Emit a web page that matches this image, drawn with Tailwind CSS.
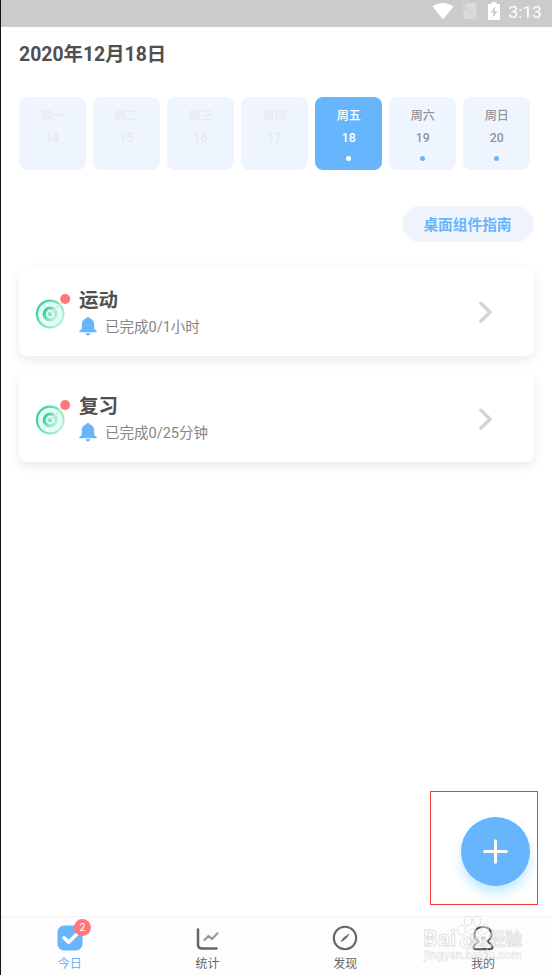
<!DOCTYPE html>
<html lang="zh-CN">
<head>
  <meta charset="UTF-8">
  <meta name="viewport" content="width=device-width, initial-scale=1.0">
  <title>今日</title>
  <script src="https://cdn.jsdelivr.net/npm/@tailwindcss/browser@4"></script>
</head>
<body class="relative flex flex-col h-[975px] overflow-hidden bg-white border-l border-[#10141f] font-[Roboto,'Noto_Sans_CJK_SC',sans-serif] text-[#505050]">
  <!-- Status bar -->
  <header class="flex items-center h-[26.5px] shrink-0 bg-[#cbcbcb] pl-[431px] text-white">
    <svg class="w-[22px] h-[18px] -mt-1" viewBox="0 0 22 18"><path d="M11 17.5 .5 4.500C6.500-.2 15.500-.2 21.500 4.500Z" fill="#fff"/></svg>
    <svg class="w-4 h-[18px] ml-2 -mt-1" viewBox="0 0 16 18"><path d="M6 1h8.500v14L3.500 3.500ZM1.500 5.500 13 17H1.500Z" fill="#dadada"/><path d="M.5 2.500 15 17.500" stroke="#dadada" stroke-width="1.500"/></svg>
    <svg class="w-3 h-[18px] ml-[10px] -mt-1" viewBox="0 0 12 18"><path d="M3.500 0h5v2H12v16H0V2h3.500Z" fill="#fff"/><path d="M7.500 4 2.500 10.500h3L4.500 16l5-7h-3Z" fill="#cbcbcb"/></svg>
    <span class="ml-[8.500px] -mt-[2px] text-[17.300px] leading-5">3:13</span>
  </header>

  <main class="flex-1 pl-[18px]">
    <h1 class="mt-[14px] h-[28px] text-[19.400px] leading-[28px] font-bold">2020年12月18日</h1>

    <!-- Week -->
    <div class="flex gap-[7.400px] mt-[28px] text-[12.300px] font-medium text-center text-[#e8e9eb]">
      <div class="w-[66.700px] h-[73.500px] rounded-lg bg-[#eff5ff] pt-[8px]">
        <p class="h-[22px] leading-[22px] text-[12px]">周一</p>
        <p class="h-[22px] leading-[22px]">14</p>
      </div>
      <div class="w-[66.700px] h-[73.500px] rounded-lg bg-[#eff5ff] pt-[8px]">
        <p class="h-[22px] leading-[22px] text-[12px]">周二</p>
        <p class="h-[22px] leading-[22px]">15</p>
      </div>
      <div class="w-[66.700px] h-[73.500px] rounded-lg bg-[#eff5ff] pt-[8px]">
        <p class="h-[22px] leading-[22px] text-[12px]">周三</p>
        <p class="h-[22px] leading-[22px]">16</p>
      </div>
      <div class="w-[66.700px] h-[73.500px] rounded-lg bg-[#eff5ff] pt-[8px]">
        <p class="h-[22px] leading-[22px] text-[12px]">周四</p>
        <p class="h-[22px] leading-[22px]">17</p>
      </div>
      <div class="w-[66.700px] h-[73.500px] rounded-lg bg-[#66b5fd] pt-[8px] text-white">
        <p class="h-[22px] leading-[22px] text-[12px]">周五</p>
        <p class="h-[22px] leading-[22px]">18</p>
        <i class="block w-[5px] h-[5px] mx-auto mt-[7.500px] rounded-full bg-white"></i>
      </div>
      <div class="w-[66.700px] h-[73.500px] rounded-lg bg-[#eff5ff] pt-[8px] text-[#8f939b]">
        <p class="h-[22px] leading-[22px] text-[12px]">周六</p>
        <p class="h-[22px] leading-[22px]">19</p>
        <i class="block w-[5px] h-[5px] mx-auto mt-[7.500px] rounded-full bg-[#66b5fd]"></i>
      </div>
      <div class="w-[66.700px] h-[73.500px] rounded-lg bg-[#eff5ff] pt-[8px] text-[#8f939b]">
        <p class="h-[22px] leading-[22px] text-[12px]">周日</p>
        <p class="h-[22px] leading-[22px]">20</p>
        <i class="block w-[5px] h-[5px] mx-auto mt-[7.500px] rounded-full bg-[#66b5fd]"></i>
      </div>
    </div>

    <button class="block ml-[382.500px] mt-[36px] w-[132px] h-[36px] rounded-full bg-[#f0f4fd] text-[14.700px] leading-[38px] font-bold text-[#66b5fd]">桌面组件指南</button>

    <!-- Habits -->
    <section class="flex flex-col gap-[18.500px] mt-[25.500px] w-[515px]">
      <div class="flex h-[88px] rounded-lg bg-white shadow-[0_4px_12px_rgba(0,0,0,0.09)]">
        <svg class="w-[36px] h-[36px] ml-4 mt-[26px]" viewBox="0 0 36 36">
          <defs>
            <linearGradient id="ring" x1="0" y1=".2" x2="1" y2=".8"><stop offset="0" stop-color="#2fcf9d"/><stop offset="1" stop-color="#baf5e1"/></linearGradient>
          </defs>
          <circle cx="15.200" cy="20" r="13.300" fill="#e6fcf5" stroke="url(#ring)" stroke-width="2.200"/>
          <circle cx="15.200" cy="20" r="6" fill="#e6fcf5" stroke="url(#ring)" stroke-width="3.200"/>
          <circle cx="15.200" cy="20" r="2.200" fill="#79dfc0"/>
          <path d="M15.500 19.500 26.500 9" stroke="#e6fcf5" stroke-width="2"/>
          <path d="M15.500 19.500 26.500 9" stroke="#90e6cb" stroke-width="1"/>
          <circle cx="30.200" cy="5" r="5" fill="#ff777b"/>
        </svg>
        <div class="ml-[8px] pt-[19px]">
          <h2 class="h-[28px] text-[19.500px] leading-[28px] font-bold">运动</h2>
          <p class="flex items-center h-[26px] text-[14.500px] text-[#858585]">
            <svg class="w-[18px] h-[19px] mr-[8px] -mt-[2.500px]" viewBox="0 0 18 19" fill="#66b5fd"><path d="M9 0c.8 0 1.400.5 1.500 1.300C13.500 2 15.200 4.400 15.200 7.500v4.500l1.500 1.300c1.500.2 1.500 2 0 2H1.300c-1.500 0-1.500-1.800 0-2L2.800 12V7.500C2.800 4.400 4.500 2 7.500 1.300 7.600.5 8.200 0 9 0ZM6.700 16.300h4.600C11 19.300 7 19.300 6.700 16.300Z"/></svg>
            已完成0/1小时
          </p>
        </div>
        <svg class="w-[15px] h-[22px] ml-auto mr-[41px] mt-[33px]" viewBox="0 0 15 22" fill="none" stroke="#d4d4d4" stroke-width="3.600" stroke-linecap="round" stroke-linejoin="round"><path d="m3 2.300 9 9-9 8.700"/></svg>
      </div>
      <div class="flex h-[88px] rounded-lg bg-white shadow-[0_4px_12px_rgba(0,0,0,0.09)]">
        <svg class="w-[36px] h-[36px] ml-4 mt-[26px]" viewBox="0 0 36 36">
          <circle cx="15.200" cy="20" r="13.300" fill="#e6fcf5" stroke="url(#ring)" stroke-width="2.200"/>
          <circle cx="15.200" cy="20" r="6" fill="#e6fcf5" stroke="url(#ring)" stroke-width="3.200"/>
          <circle cx="15.200" cy="20" r="2.200" fill="#79dfc0"/>
          <path d="M15.500 19.500 26.500 9" stroke="#e6fcf5" stroke-width="2"/>
          <path d="M15.500 19.500 26.500 9" stroke="#90e6cb" stroke-width="1"/>
          <circle cx="30.200" cy="5" r="5" fill="#ff777b"/>
        </svg>
        <div class="ml-[8px] pt-[19px]">
          <h2 class="h-[28px] text-[19.500px] leading-[28px] font-bold">复习</h2>
          <p class="flex items-center h-[26px] text-[14.500px] text-[#858585]">
            <svg class="w-[18px] h-[19px] mr-[8px] -mt-[2.500px]" viewBox="0 0 18 19" fill="#66b5fd"><path d="M9 0c.8 0 1.400.5 1.500 1.300C13.500 2 15.200 4.400 15.200 7.500v4.500l1.500 1.300c1.500.2 1.500 2 0 2H1.300c-1.500 0-1.500-1.800 0-2L2.800 12V7.500C2.800 4.400 4.500 2 7.500 1.300 7.600.5 8.200 0 9 0ZM6.700 16.300h4.600C11 19.300 7 19.300 6.700 16.300Z"/></svg>
            已完成0/25分钟
          </p>
        </div>
        <svg class="w-[15px] h-[22px] ml-auto mr-[41px] mt-[33.500px]" viewBox="0 0 15 22" fill="none" stroke="#d4d4d4" stroke-width="3.600" stroke-linecap="round" stroke-linejoin="round"><path d="m3 2.300 9 9-9 8.700"/></svg>
      </div>
    </section>
  </main>

  <!-- Add button -->
  <div class="absolute left-[429px] top-[791px] w-[108px] h-[114px] border border-[#f43b3b]">
    <button class="absolute left-[30px] top-[25px] flex items-center justify-center w-[69px] h-[69px] rounded-full bg-[#66b5fd] shadow-[0_7px_12px_#c3e8ff]">
      <svg class="w-[25px] h-[25px]" viewBox="0 0 25 25" stroke="#fff" stroke-width="3" stroke-linecap="round"><path d="M12.500 1.700v21.600M1.700 12.500h21.600"/></svg>
    </button>
  </div>

  <!-- Tab bar -->
  <nav class="grid grid-cols-4 h-[59px] shrink-0 border-t border-[#f3f3f3] bg-[#fdfdfd] text-[12px] leading-[18px] text-[#666]">
    <a class="relative flex flex-col items-center pt-[8px] text-[#66b5fd]">
      <svg class="w-[26px] h-[26px]" viewBox="0 0 26 26"><rect x=".5" y=".5" width="25" height="25" rx="6.500" fill="#66b5fd"/><path d="m7 12.800 4.500 4.500L19.500 9.500" fill="none" stroke="#fff" stroke-width="3.600" stroke-linecap="round" stroke-linejoin="round"/></svg>
      <span class="absolute left-[73px] top-[2px] w-[17px] h-[17px] rounded-full bg-[#ff777b] text-[10.500px] leading-[18px] text-center text-white">2</span>
      <span class="mt-[4px]">今日</span>
    </a>
    <a class="flex flex-col items-center pt-[8px]">
      <svg class="w-[26px] h-[26px]" viewBox="0 0 26 26" fill="none" stroke-linecap="round" stroke-linejoin="round"><path d="M3 4.500v15q0 4 4 4h14.500" stroke="#666" stroke-width="2.500"/><path d="m9.500 15 4-4 3.500 3 5.500-5.700" stroke="#999" stroke-width="2.200"/></svg>
      <span class="mt-[4px]">统计</span>
    </a>
    <a class="flex flex-col items-center pt-[8px]">
      <svg class="w-[26px] h-[26px]" viewBox="0 0 26 26"><circle cx="13" cy="13" r="11.200" fill="none" stroke="#666" stroke-width="2.100"/><path d="M17 9q-1.500 4-8 8 1.300-4.300 8-8Z" fill="#666" stroke="#666" stroke-width=".6"/></svg>
      <span class="mt-[4px]">发现</span>
    </a>
    <a class="flex flex-col items-center pt-[8px]">
      <svg class="w-[26px] h-[26px]" viewBox="0 0 26 26" fill="none" stroke="#555" stroke-width="2.200" stroke-linecap="round" stroke-linejoin="round"><path d="M8.500 16.500C1.500 12 4 2 13 2S24.500 12 17.500 16.500l4 3.500q2.500 4.200-1.500 4.200H6q-4 0-1.500-4.200Z"/><path d="M11.500 13h3L13 14.500Z" stroke-width="1"/></svg>
      <span class="mt-[4px]">我的</span>
    </a>
  </nav>

  <!-- Watermark -->
  <svg class="absolute left-[419px] top-[912px] w-[105px] h-[54px]" viewBox="0 0 105 54" fill="#fff" fill-opacity=".4" stroke="#d2d2d2" stroke-opacity=".7" stroke-width=".9">
    <ellipse cx="41.500" cy="18" rx="3.800" ry="4.800"/>
    <ellipse cx="48" cy="9" rx="3.800" ry="5"/>
    <ellipse cx="57" cy="9" rx="3.800" ry="5"/>
    <ellipse cx="65" cy="17" rx="3.800" ry="4.800"/>
    <path d="M40 31c0-5 6-7 8-11 2-4 8-4 10 0s10 7 10 12c-1 5-8 4-14 4s-14 1-14-5Z"/>
    <g font-weight="700">
      <text x="3" y="34" font-size="22" textLength="33" lengthAdjust="spacingAndGlyphs">Bai</text>
      <text x="43" y="34" font-size="17" textLength="23" lengthAdjust="spacingAndGlyphs">du</text>
      <text x="69" y="33" font-size="17" textLength="33" lengthAdjust="spacingAndGlyphs">经验</text>
      <text x="4" y="47" font-size="12" font-weight="500" stroke-width=".5" textLength="98" lengthAdjust="spacingAndGlyphs">jingyan.baidu.com</text>
    </g>
  </svg>
</body>
</html>
